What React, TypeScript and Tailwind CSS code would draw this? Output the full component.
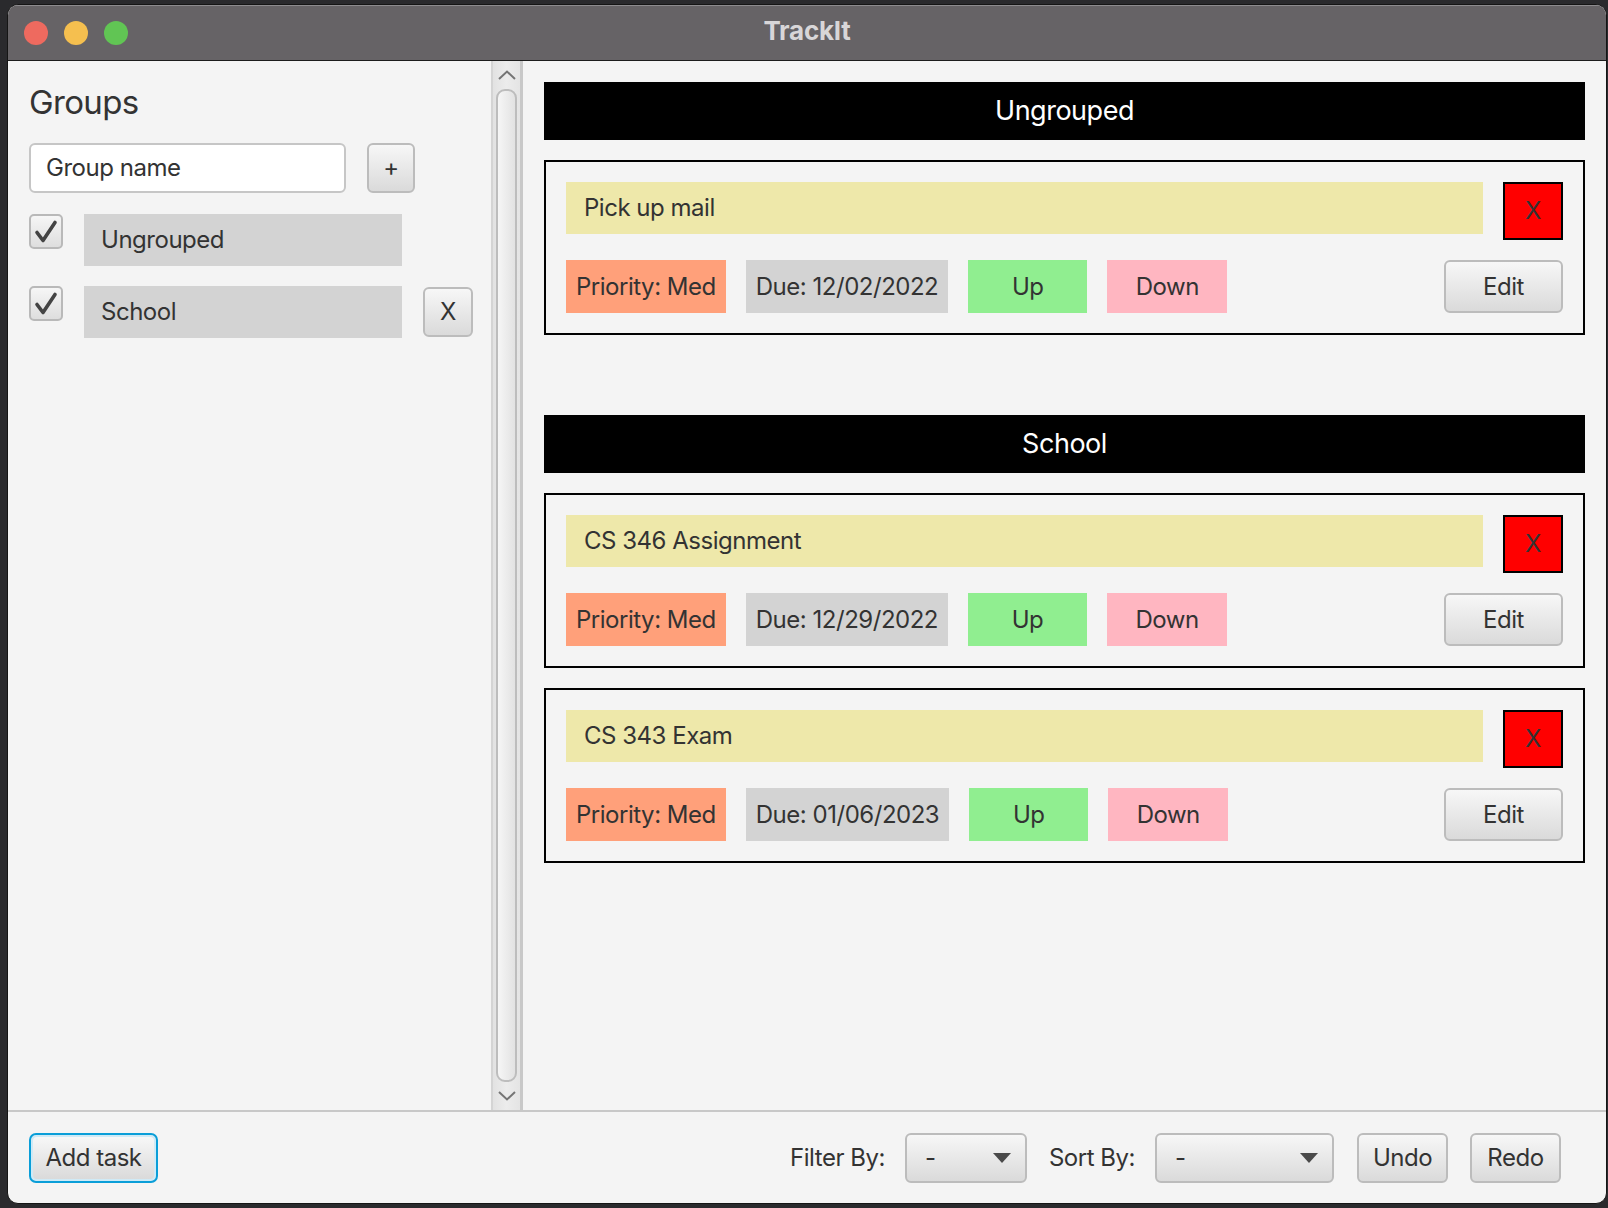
import React from "react";

function Check() {
  return (
    <div className="w-[34px] h-[35px] shrink-0 rounded-[5px] border-2 border-[#b9b9b9] bg-linear-to-b from-[#f6f6f6] to-[#dedede] flex items-center justify-center">
      <svg width="26" height="26" viewBox="0 0 26 26" fill="none">
        <path d="M4 13.5 L10 21.5 L22 3.5" stroke="#444444" strokeWidth="3.6" strokeLinecap="round" strokeLinejoin="round" />
      </svg>
    </div>
  );
}

function Btn({ children, className = "" }: { children: React.ReactNode; className?: string }) {
  return (
    <div
      className={
        "flex items-center justify-center rounded-[6px] border-2 border-[#bcbcbc] bg-linear-to-b from-[#f7f7f7] to-[#dadada] text-[24px] text-[#333333] " +
        className
      }
    >
      {children}
    </div>
  );
}

function Combo({ className = "" }: { className?: string }) {
  return (
    <div
      className={
        "h-[50px] flex items-center justify-between pl-[18px] pr-[14px] rounded-[6px] border-2 border-[#bcbcbc] bg-linear-to-b from-[#f7f7f7] to-[#dadada] text-[24px] text-[#333333] " +
        className
      }
    >
      <span>-</span>
      <svg width="18" height="10" viewBox="0 0 18 10">
        <path d="M0 0 L18 0 L9 10 Z" fill="#4a4a4a" />
      </svg>
    </div>
  );
}

type Task = { title: string; due: string };

function TaskCard({ task }: { task: Task }) {
  return (
    <div className="border-2 border-black p-[20px] flex flex-col">
      <div className="flex items-start gap-[20px]">
        <div className="flex-1 h-[52px] bg-[#eee8aa] pl-[18px] flex items-center text-[24px] text-[#333333]">
          {task.title}
        </div>
        <div className="w-[60px] h-[58px] border-2 border-black bg-[#ff0000] flex items-center justify-center text-[24px] text-[#333333]">
          X
        </div>
      </div>
      <div className="mt-[20px] flex items-center gap-[20px] h-[53px] text-[24px] text-[#333333]">
        <div className="h-[53px] px-[10px] bg-[#ffa07a] flex items-center">Priority: Med</div>
        <div className="h-[53px] px-[10px] bg-[#d3d3d3] flex items-center">Due: {task.due}</div>
        <div className="h-[53px] w-[119px] bg-[#90ee90] flex items-center justify-center">Up</div>
        <div className="h-[53px] w-[120px] bg-[#ffb6c1] flex items-center justify-center">Down</div>
        <Btn className="ml-auto w-[119px] h-[53px]">Edit</Btn>
      </div>
    </div>
  );
}

function Section({ name, tasks }: { name: string; tasks: Task[] }) {
  return (
    <div className="flex flex-col gap-[20px]">
      <div className="h-[58px] bg-black text-white text-[27px] flex items-center justify-center">{name}</div>
      {tasks.map((t) => (
        <TaskCard key={t.title} task={t} />
      ))}
    </div>
  );
}

export default function App() {
  return (
    <div className="w-[1608px] h-[1208px] bg-[#2a2a2d] pt-[4px] pl-[7px] pr-[1px] pb-[4px] overflow-hidden font-['Inter',sans-serif] tracking-[-0.03em]">
      <div className="w-full h-full flex flex-col bg-[#f4f4f4] rounded-[11px] overflow-hidden border border-[#151515]">
        {/* Title bar */}
        <div className="relative h-[56px] shrink-0 bg-[#666366] border-t border-t-[#8d8b8e] border-b border-b-[#1c1c1c] flex items-center pl-[16px] gap-[16px]">
          <div className="w-[24px] h-[24px] rounded-full bg-[#ee6a5f]" />
          <div className="w-[24px] h-[24px] rounded-full bg-[#f5bf4f]" />
          <div className="w-[24px] h-[24px] rounded-full bg-[#61c554]" />
          <div className="absolute inset-0 pb-[5px] flex items-center justify-center text-[26px] font-bold text-[#d8d6d8] tracking-[-0.01em]">
            TrackIt
          </div>
        </div>

        {/* Main content */}
        <div className="flex-1 flex min-h-0">
          {/* Left panel */}
          <div className="w-[483px] shrink-0 pl-[21px] pt-[21px] flex flex-col text-[#333333]">
            <div className="h-[40px] leading-[40px] text-[33px] tracking-[-0.02em]">Groups</div>
            <div className="mt-[21px] flex items-center gap-[21px]">
              <div className="w-[317px] h-[50px] rounded-[6px] border-2 border-[#c6c6c6] bg-white pl-[15px] flex items-center text-[24px]">
                Group name
              </div>
              <Btn className="w-[48px] h-[50px]">+</Btn>
            </div>
            <div className="mt-[21px] flex items-start gap-[21px]">
              <Check />
              <div className="w-[318px] h-[52px] bg-[#d3d3d3] pl-[17px] flex items-center text-[24px]">Ungrouped</div>
            </div>
            <div className="mt-[20px] flex items-start gap-[21px]">
              <Check />
              <div className="w-[318px] h-[52px] bg-[#d3d3d3] pl-[17px] flex items-center text-[24px]">School</div>
              <Btn className="w-[50px] h-[50px] mt-[1px]">X</Btn>
            </div>
          </div>

          {/* Scrollbar */}
          <div className="w-[29px] shrink-0 flex flex-col bg-linear-to-r from-[#e2e2e2] via-[#ececec] to-[#e4e4e4] border-l-2 border-[#d4d4d4]">
            <div className="h-[28px] flex items-center justify-center">
              <svg width="18" height="10" viewBox="0 0 18 10" fill="none">
                <path d="M1 9 L9 1.5 L17 9" stroke="#757575" strokeWidth="2" />
              </svg>
            </div>
            <div className="flex-1 mx-[3px] rounded-[9px] border-2 border-[#bdbdbd] bg-linear-to-r from-[#f6f6f6] to-[#e2e2e2]" />
            <div className="h-[28px] flex items-center justify-center">
              <svg width="18" height="10" viewBox="0 0 18 10" fill="none">
                <path d="M1 1 L9 8.5 L17 1" stroke="#757575" strokeWidth="2" />
              </svg>
            </div>
          </div>
          <div className="w-[3px] shrink-0 bg-[#c8c8c8]" />

          {/* Right panel */}
          <div className="flex-1 px-[21px] pt-[21px] flex flex-col gap-[80px]">
            <Section name="Ungrouped" tasks={[{ title: "Pick up mail", due: "12/02/2022" }]} />
            <Section
              name="School"
              tasks={[
                { title: "CS 346 Assignment", due: "12/29/2022" },
                { title: "CS 343 Exam", due: "01/06/2023" },
              ]}
            />
          </div>
        </div>

        {/* Bottom bar */}
        <div className="h-[93px] shrink-0 border-t-2 border-[#c8c8c8] flex items-center pl-[21px] pr-[45px] text-[24px] text-[#333333]">
          <div className="w-[129px] h-[50px] rounded-[7px] border-2 border-[#0a9ed8] p-[2px] bg-[#cfeaf6]">
            <div className="w-full h-full rounded-[4px] bg-linear-to-b from-[#f7f7f7] to-[#dadada] flex items-center justify-center">
              Add task
            </div>
          </div>
          <div className="ml-auto flex items-center gap-[20px]">
            <span>Filter By:</span>
            <Combo className="w-[122px]" />
            <span className="ml-[2px]">Sort By:</span>
            <Combo className="w-[179px]" />
            <Btn className="w-[91px] h-[50px] ml-[3px]">Undo</Btn>
            <Btn className="w-[91px] h-[50px] ml-[2px]">Redo</Btn>
          </div>
        </div>
      </div>
    </div>
  );
}
